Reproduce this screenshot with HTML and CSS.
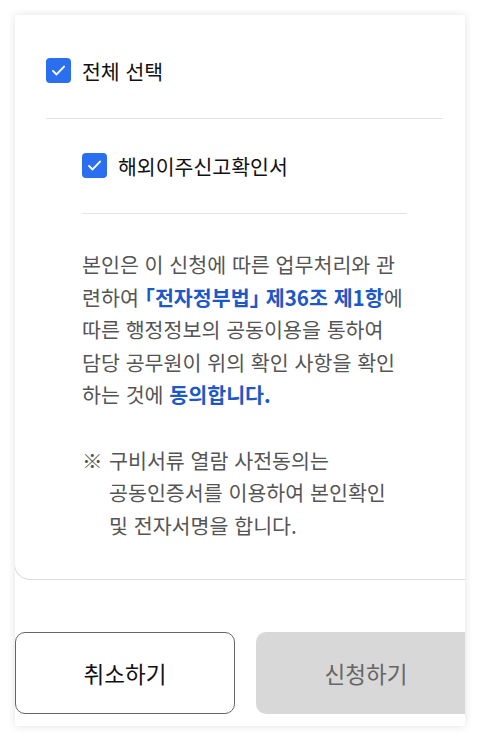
FILE: index.html
```html
<!DOCTYPE html>
<html lang="ko">
<head>
    <meta charset="UTF-8">
    <meta name="viewport" content="width=device-width, initial-scale=1.0">
    <title>행정정보 공동이용 동의</title>
    <link rel="stylesheet" href="styles.css">
</head>
<body>
    <div class="panel">
        <div class="card">
            <label class="check-row">
                <span class="check-box">
                    <svg viewBox="0 0 24 24" width="19" height="19"><path d="M5 12.5l4.5 4.5 9.5-10" fill="none" stroke="#fff" stroke-width="2.4" stroke-linecap="round" stroke-linejoin="round"/></svg>
                </span>
                <span class="check-label">전체 선택</span>
            </label>
            <hr class="divider">
            <div class="sub">
                <label class="check-row">
                    <span class="check-box">
                        <svg viewBox="0 0 24 24" width="19" height="19"><path d="M5 12.5l4.5 4.5 9.5-10" fill="none" stroke="#fff" stroke-width="2.4" stroke-linecap="round" stroke-linejoin="round"/></svg>
                    </span>
                    <span class="check-label">해외이주신고확인서</span>
                </label>
                <hr class="divider">
                <p class="agree">본인은 이 신청에 따른 업무처리와 관<br>련하여 <b>「전자정부법」 제36조 제1항</b>에<br>따른 행정정보의 공동이용을 통하여<br>담당 공무원이 위의 확인 사항을 확인<br>하는 것에 <b>동의합니다.</b></p>
                <p class="note"><span class="mark">※</span>구비서류 열람 사전동의는<br>공동인증서를 이용하여 본인확인<br>및 전자서명을 합니다.</p>
            </div>
        </div>
        <div class="actions">
            <button class="btn btn-cancel">취소하기</button>
            <button class="btn btn-submit">신청하기</button>
        </div>
    </div>
</body>
</html>
```

FILE: styles.css
```css
body {
    margin: 0;
    padding: 15px;
    background-color: #fff;
    font-family: "Noto Sans CJK KR", "Noto Sans", sans-serif;
}
.panel {
    width: 450px;
    height: 711px;
    background-color: #fff;
    box-shadow: 0 0 8px rgba(0, 0, 0, 0.12);
    overflow: hidden;
}
.card {
    padding: 43px 22px 38px 31px;
    border-left: 1px solid #ddd;
    border-bottom: 1px solid #ddd;
    border-bottom-left-radius: 16px;
    margin-left: -1px;
}
.check-row {
    display: flex;
    align-items: center;
    gap: 11px;
    height: 25px;
}
.check-box {
    width: 25px;
    height: 25px;
    border-radius: 4px;
    background-color: #2a6ff0;
    display: flex;
    align-items: center;
    justify-content: center;
}
.check-label {
    font-size: 20.5px;
    color: #111;
}
.divider {
    border: 0;
    border-top: 1px solid #e3e3e3;
    margin: 35px 0 34px;
}
.sub {
    margin: 0 36px;
}
.agree, .note {
    margin: 0;
    font-size: 20.6px;
    line-height: 32.5px;
    color: #555;
    white-space: nowrap;
}
.agree {
    margin-top: 12px;
}
.agree b {
    color: #1c58c8;
    font-feature-settings: "halt";
}
.note {
    margin-top: 33px;
    padding-left: 27px;
    text-indent: -27px;
}
.mark {
    display: inline-block;
    width: 27px;
    text-indent: 0;
}
.actions {
    display: flex;
    gap: 21px;
    margin-top: 52px;
}
.btn {
    flex: 0 0 220px;
    height: 82px;
    border-radius: 10px;
    font-family: inherit;
    font-size: 22.5px;
}
.btn-cancel {
    background-color: #fff;
    border: 1px solid #666;
    color: #111;
}
.btn-submit {
    background-color: #d8d8d8;
    border: 0;
    color: #666;
}
```
